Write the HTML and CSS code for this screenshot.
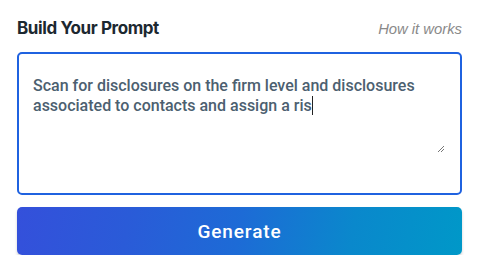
FILE: index.html
```
<!DOCTYPE html>
<html>
<head>
<meta charset="utf-8">
<link rel="stylesheet" href="styles.css">
</head>
<body>
<div class="panel">
  <div class="header">
    <h2 class="title">Build Your Prompt</h2>
    <a class="help">How it works</a>
  </div>
  <div class="input">
    <p class="text">Scan for disclosures on the firm level and disclosures associated to contacts and assign a ris<span class="caret"></span></p>
    <svg class="grip" width="8" height="8" viewBox="0 0 8 8"><path d="M7 1L1 7M7 4L4 7" stroke="#777" stroke-width="1" fill="none"/></svg>
  </div>
  <button class="generate">Generate</button>
</div>
</body>
</html>
```
FILE: styles.css
```
* { box-sizing: border-box; }
html, body { margin: 0; padding: 0; background: #fff; }
body { font-family: Roboto, "Noto Sans", sans-serif; }
.panel { padding: 16px 16px 0 17px; display: flex; flex-direction: column; }
.header { display: flex; justify-content: space-between; align-items: baseline; height: 36px; padding-top: 1px; }
.title { margin: 0; font-family: Inter, sans-serif; font-size: 17px; font-weight: 700; color: #1c2830; letter-spacing: -0.4px; line-height: 22px; }
.help { font-family: "Liberation Sans", Arial, sans-serif; font-size: 14.8px; font-style: italic; color: #8a8a8a; line-height: 22px; margin-right: 0; }
.input { position: relative; height: 143px; border: 2px solid #1f62e0; border-radius: 5px; padding: 22px 30px 0 14px; }
.text { margin: 0; font-size: 16px; font-weight: 500; line-height: 20px; color: #4c6070; letter-spacing: 0; }
.caret { display: inline-block; width: 1px; height: 19px; background: #222; vertical-align: -4px; }
.grip { position: absolute; right: 15px; bottom: 40px; }
.generate { margin-top: 12px; height: 48px; width: 100%; border: none; border-radius: 5px; color: #fff; font-family: Roboto, "Noto Sans", sans-serif; font-size: 19px; font-weight: 500; letter-spacing: 0.9px;
  background: linear-gradient(100deg, #3450db 0%, #2a5bd8 25%, #1d6bd6 50%, #0a88cc 75%, #0098c8 100%);
  box-shadow: 0 2px 3px rgba(0,0,0,0.18); }
```
